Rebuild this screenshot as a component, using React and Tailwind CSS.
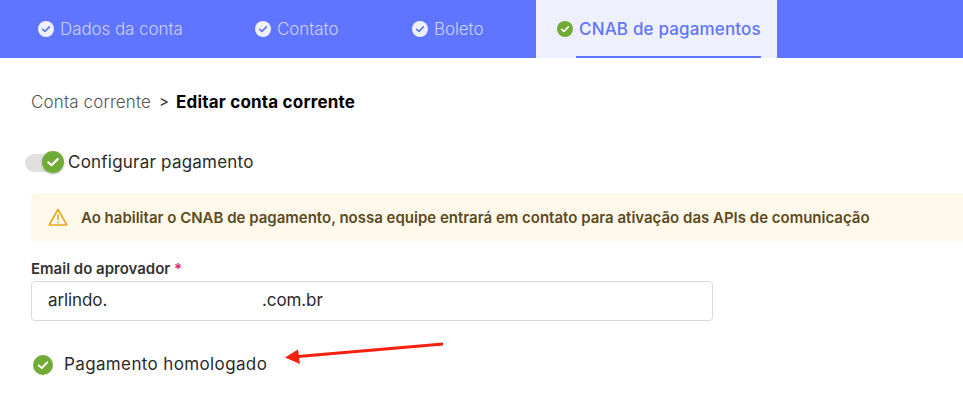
import React from 'react';

const font = { fontFamily: 'Inter, "Open Sans", sans-serif' };

const CheckBadge = ({ size, bg, tick }) => (
  <svg width={size} height={size} viewBox="0 0 20 20" className="shrink-0">
    <circle cx="10" cy="10" r="10" fill={bg} />
    <path d="M5.8 10.4l2.9 2.6 5.5-5.6" fill="none" stroke={tick} strokeWidth="2" strokeLinecap="round" strokeLinejoin="round" />
  </svg>
);

const DoneTab = ({ label, className }) => (
  <div className={`flex items-center gap-[6px] ${className}`}>
    <CheckBadge size={16} bg="#eff0fd" tick="#5f75ff" />
    <span className="mt-[2px] text-[17px] font-light text-[#c9d0ff] tracking-[-0.08px]">{label}</span>
  </div>
);

const App = () => {
  return (
    <div className="relative w-[963px] h-[417px] overflow-hidden bg-white" style={font}>
      {/* Tabs */}
      <div className="flex h-[58px] bg-[#5f75ff]">
        <DoneTab label="Dados da conta" className="ml-[38px] w-[217px]" />
        <DoneTab label="Contato" className="w-[157px]" />
        <DoneTab label="Boleto" className="w-[124px]" />
        <div className="relative flex w-[241px] items-center gap-[6px] bg-[#eff0fd] pl-[21px]">
          <CheckBadge size={16} bg="#6fab35" tick="#ffffff" />
          <span className="mt-[2px] text-[17px] font-medium text-[#5f75ff] tracking-[0.16px]">CNAB de pagamentos</span>
          <div className="absolute bottom-0 left-[40px] h-[2px] w-[185px] bg-[#5f75ff]" />
        </div>
      </div>

      {/* Breadcrumb */}
      <div className="mt-[34px] flex h-[20px] items-center pl-[31px]">
        <span className="mt-[2px] text-[17px] font-light text-[#555] tracking-[0.14px]">Conta corrente</span>
        <span className="ml-[8px] text-[15px] text-[#333]">&gt;</span>
        <span className="ml-[7px] mt-[2px] text-[17px] font-bold text-black tracking-[0.2px]">Editar conta corrente</span>
      </div>

      {/* Toggle */}
      <div className="mt-[39px] flex h-[22px] items-center pl-[25px]">
        <div className="relative mt-[2px] h-[18px] w-[38px] rounded-full bg-[#e0e0e0]">
          <div className="absolute left-[17px] top-[-3px] rounded-full shadow-[0_1px_2px_rgba(0,0,0,0.3)]">
            <CheckBadge size={22} bg="#6fab35" tick="#ffffff" />
          </div>
        </div>
        <span className="ml-[5px] mt-[2px] text-[17px] text-[#2b2b2b] tracking-[0.22px]">Configurar pagamento</span>
      </div>

      {/* Alert */}
      <div className="ml-[31px] mt-[20px] flex h-[48px] items-center rounded-l-[4px] bg-[#fef9ea] pl-[17px]">
        <svg width="20" height="18" viewBox="0 0 20 18" className="shrink-0">
          <path d="M10 1.5L18.8 17H1.2z" fill="none" stroke="#e5a823" strokeWidth="1.6" strokeLinejoin="round" />
          <path d="M10 6.5v5.5M10 13.4v1.6" stroke="#e5a823" strokeWidth="1.6" />
        </svg>
        <span className="ml-[13px] mt-[2px] whitespace-nowrap text-[15px] font-semibold text-[#5c4a1e]">
          Ao habilitar o CNAB de pagamento, nossa equipe entrará em contato para ativação das APIs de comunicação
        </span>
      </div>

      {/* Email */}
      <div className="ml-[31px] mt-[19px] w-[682px]">
        <div className="h-[18px] text-[15px] font-semibold leading-[18px] text-[#333]">
          Email do aprovador <span className="text-[#e0245e]">*</span>
        </div>
        <div className="mt-[3px] flex h-[40px] items-center rounded-[4px] border border-[#d9d9d9] bg-white pl-[16px] text-[17px] text-[#2b2b2b] tracking-[-0.1px]">
          <span className="w-[214px]">arlindo.</span>
          <span>.com.br</span>
        </div>
      </div>

      {/* Status */}
      <div className="ml-[33px] mt-[33px] flex h-[22px] items-center">
        <CheckBadge size={20} bg="#6fab35" tick="#ffffff" />
        <span className="ml-[11px] text-[17px] text-[#2b2b2b] tracking-[0.37px]">Pagamento homologado</span>
      </div>

      {/* Arrow annotation */}
      <svg width="170" height="30" viewBox="0 0 170 30" className="absolute left-[280px] top-[338px]">
        <path d="M163 6L18 18.5" stroke="#f8200f" strokeWidth="3" />
        <path d="M5 19.5L18 11.5L20 26z" fill="#f8200f" />
      </svg>
    </div>
  );
};

export default App;
